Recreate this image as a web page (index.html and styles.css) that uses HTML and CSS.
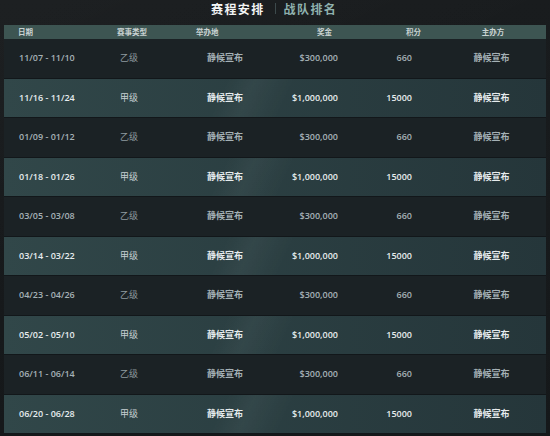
FILE: index.html
```html
<!DOCTYPE html>
<html lang="zh">
<head>
<meta charset="utf-8">
<title>赛程安排</title>
<link rel="stylesheet" href="styles.css">
</head>
<body>
<div class="page">
  <div class="tabs">
    <span class="tab active">赛程安排</span>
    <span class="sep"></span>
    <span class="tab">战队排名</span>
  </div>
  <div class="table">
    <div class="row head">
      <div class="c c1">日期</div>
      <div class="c c2">赛事类型</div>
      <div class="c c3">举办地</div>
      <div class="c c4">奖金</div>
      <div class="c c5">积分</div>
      <div class="c c6">主办方</div>
    </div>
    <div class="row minor"><div class="c c1">11/07 - 11/10</div><div class="c c2">乙级</div><div class="c c3">静候宣布</div><div class="c c4">$300,000</div><div class="c c5">660</div><div class="c c6">静候宣布</div></div>
    <div class="row major"><div class="c c1">11/16 - 11/24</div><div class="c c2">甲级</div><div class="c c3">静候宣布</div><div class="c c4">$1,000,000</div><div class="c c5">15000</div><div class="c c6">静候宣布</div></div>
    <div class="row minor"><div class="c c1">01/09 - 01/12</div><div class="c c2">乙级</div><div class="c c3">静候宣布</div><div class="c c4">$300,000</div><div class="c c5">660</div><div class="c c6">静候宣布</div></div>
    <div class="row major"><div class="c c1">01/18 - 01/26</div><div class="c c2">甲级</div><div class="c c3">静候宣布</div><div class="c c4">$1,000,000</div><div class="c c5">15000</div><div class="c c6">静候宣布</div></div>
    <div class="row minor"><div class="c c1">03/05 - 03/08</div><div class="c c2">乙级</div><div class="c c3">静候宣布</div><div class="c c4">$300,000</div><div class="c c5">660</div><div class="c c6">静候宣布</div></div>
    <div class="row major"><div class="c c1">03/14 - 03/22</div><div class="c c2">甲级</div><div class="c c3">静候宣布</div><div class="c c4">$1,000,000</div><div class="c c5">15000</div><div class="c c6">静候宣布</div></div>
    <div class="row minor"><div class="c c1">04/23 - 04/26</div><div class="c c2">乙级</div><div class="c c3">静候宣布</div><div class="c c4">$300,000</div><div class="c c5">660</div><div class="c c6">静候宣布</div></div>
    <div class="row major"><div class="c c1">05/02 - 05/10</div><div class="c c2">甲级</div><div class="c c3">静候宣布</div><div class="c c4">$1,000,000</div><div class="c c5">15000</div><div class="c c6">静候宣布</div></div>
    <div class="row minor"><div class="c c1">06/11 - 06/14</div><div class="c c2">乙级</div><div class="c c3">静候宣布</div><div class="c c4">$300,000</div><div class="c c5">660</div><div class="c c6">静候宣布</div></div>
    <div class="row major"><div class="c c1">06/20 - 06/28</div><div class="c c2">甲级</div><div class="c c3">静候宣布</div><div class="c c4">$1,000,000</div><div class="c c5">15000</div><div class="c c6">静候宣布</div></div>
  </div>
</div>
</body>
</html>
```

FILE: styles.css
```css
html, body {
  margin: 0;
  padding: 0;
}
body {
  width: 550px;
  height: 436px;
  overflow: hidden;
  background: #131618;
  font-family: "Open Sans", "Noto Sans CJK SC", sans-serif;
}
.page {
  height: 436px;
  background:
    linear-gradient(155deg, rgba(255,255,255,0.02) 0%, rgba(255,255,255,0) 40%),
    linear-gradient(180deg, #191c1e 0%, #15181a 100%);
}
.tabs {
  height: 25px;
  display: flex;
  align-items: center;
  padding-left: 211px;
  box-sizing: border-box;
  padding-bottom: 8px;
}
.tab {
  font-family: "Noto Sans CJK SC", sans-serif;
  font-size: 12px;
  font-weight: 700;
  letter-spacing: 1.4px;
  line-height: 14px;
  color: #8fb1ae;
}
.tab.active {
  color: #f2f4f4;
}
.sep {
  width: 1px;
  height: 11px;
  background: #3d4a4c;
  margin: 0 8px 0 10px;
}
.table {
  margin-left: 4px;
  width: 542px;
  background: #1b2124;
}
.row {
  display: grid;
  grid-template-columns: 100px 76px 80px 90px 90px 106px;
  align-items: center;
  height: 39.5px;
  box-sizing: border-box;
  border-bottom: 1px solid #12171a;
  font-size: 9px;
  font-weight: 600;
}
.row.head {
  height: 14px;
  background: #3d5552;
  border-bottom: none;
  font-family: "Noto Sans CJK SC", sans-serif;
  font-size: 7.5px;
  font-weight: 700;
  color: #c9d3d2;
}
.row.minor {
  background: #1b2225;
  color: #a5b1b6;
}
.row.major {
  background:
    linear-gradient(115deg, rgba(255,255,255,0) 40%, rgba(255,255,255,0.04) 45%, rgba(255,255,255,0) 52%),
    linear-gradient(90deg, #314749 0%, #2b3f42 45%, #25363a 100%);
  color: #e6ecee;
}
.c {
  white-space: nowrap;
  line-height: 12px;
}
.row .c2, .row .c3, .row .c6 {
  font-family: "Noto Sans CJK SC", sans-serif;
}
.row .c2 { font-weight: 400; }
.row .c3, .row .c6 { font-weight: 700; }
.row.minor .c2 { color: #8e9a9f; }
.row.major .c2 { color: #c8d1d3; }

.c1 { padding-left: 15px; }
.c2 { padding-left: 16px; }
.c3 { padding-left: 27px; }
.c4 { text-align: right; padding-right: 12px; }
.c5 { text-align: right; padding-right: 28px; }
.c6 { text-align: center; padding-right: 3px; }

.row.head .c1 { padding-left: 14px; }
.row.head .c2 { padding-left: 13px; }
.row.head .c3 { padding-left: 16px; }
.row.head .c4 { text-align: left; padding-left: 57px; padding-right: 0; }
.row.head .c5 { text-align: left; padding-left: 56px; padding-right: 0; }
.row.head .c6 { text-align: center; padding-right: 0; font-weight: 700; }
.row.head .c2, .row.head .c3 { font-weight: 700; }
```
